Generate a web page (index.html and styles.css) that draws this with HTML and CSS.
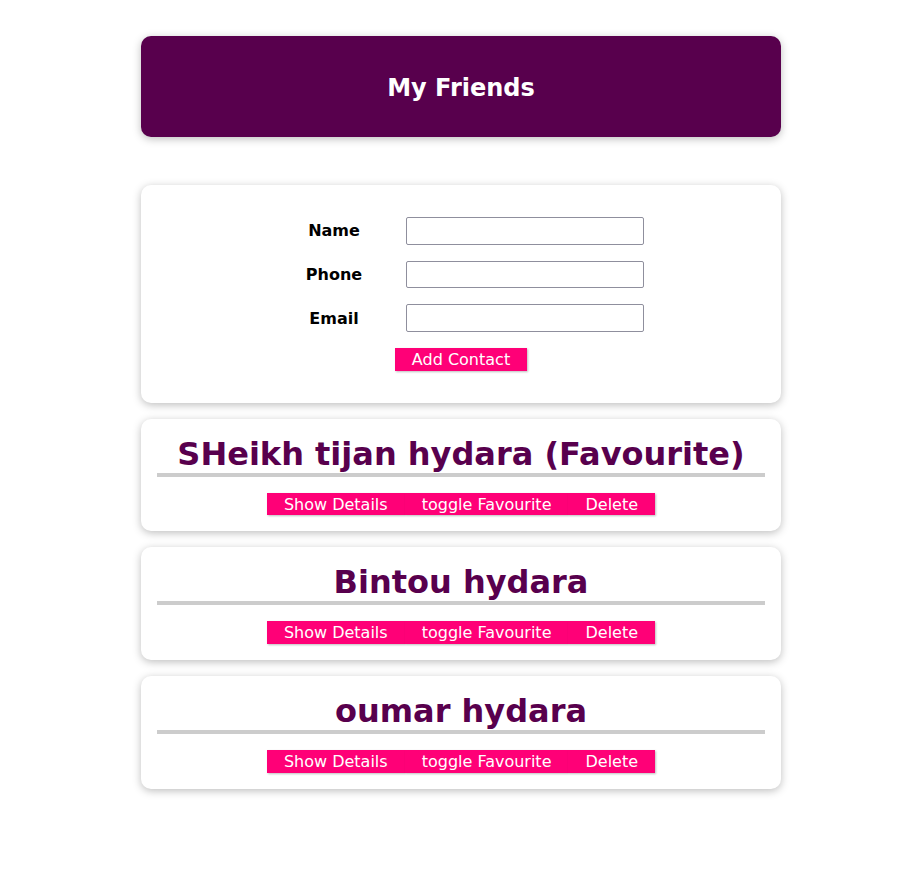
FILE: index.html
```html
<html>
<head>
    <title>My Friends</title>
    <link rel="stylesheet" href="styles.css">
</head>
<body>
    <div id="app">
        <header>
            <h2>My Friends</h2>
        </header>
        <section class="card">
            <form id="new-friend">
                <div class="form-control">
                    <label for="name">Name</label>
                    <input type="text" id="name">
                </div>
                <div class="form-control">
                    <label for="phone">Phone</label>
                    <input type="tel" id="phone">
                </div>
                <div class="form-control">
                    <label for="email">Email</label>
                    <input type="email" id="email">
                </div>
                <div>
                    <button type="submit">Add Contact</button>
                </div>
            </form>
        </section>
        <ul>
            <li class="card">
                <h2>SHeikh tijan hydara (Favourite)</h2>
                <button>Show Details</button><button>toggle Favourite</button><button>Delete</button>
            </li>
            <li class="card">
                <h2>Bintou hydara</h2>
                <button>Show Details</button><button>toggle Favourite</button><button>Delete</button>
            </li>
            <li class="card">
                <h2>oumar hydara</h2>
                <button>Show Details</button><button>toggle Favourite</button><button>Delete</button>
            </li>
        </ul>
    </div>
</body>
</html>
```

FILE: styles.css
```css
*{
    box-sizing: border-box;
}
html{
    font-family: "DejaVu Sans", sans-serif;
}
body{
    margin: 0;
    padding: 36px 0 0 23px;
    background-color: white;
}
header{
    box-shadow: 0 2px 8px rgba(0, 0, 0, 0.26);
    margin: 0 auto 3rem auto;
    border-radius: 10px;
    padding: 18px 1rem 15px 1rem;
    background-color: #58004d;
    color: white;
    text-align: center;
    width: 90%;
    max-width: 40rem;
}
header h2{
    font-size: 1.5rem;
    margin: 20px 0;
}
.card{
    box-shadow: 0 2px 8px rgba(0, 0, 0, 0.26);
    margin: 1rem auto;
    border-radius: 10px;
    padding: 1rem;
    text-align: center;
    width: 90%;
    max-width: 40rem;
    background-color: white;
}
ul{
    margin: 0;
    padding: 0;
    list-style: none;
}
.card h2{
    font-size: 2rem;
    border-bottom: 4px solid #ccc;
    color: #58004d;
    margin: 0 0 1rem 0;
}
form div{
    margin: 1rem 0;
}
.form-control{
    display: flex;
    justify-content: center;
    align-items: center;
}
label{
    font-weight: bold;
    width: 7rem;
    margin-right: 1rem;
    text-align: center;
}
input{
    font: inherit;
    width: 238px;
    padding: 0.21rem;
    border: 1px solid #8f8f9d;
    border-radius: 2px;
}
button{
    font: inherit;
    cursor: pointer;
    border: 1px solid #ff0077;
    background-color: #ff0077;
    color: white;
    padding: 0.05rem 1rem;
    box-shadow: 1px 1px 2px rgba(0, 0, 0, 0.26);
}
button:hover{
    background-color: #ec3169;
    border-color: #ec3169;
}
```
